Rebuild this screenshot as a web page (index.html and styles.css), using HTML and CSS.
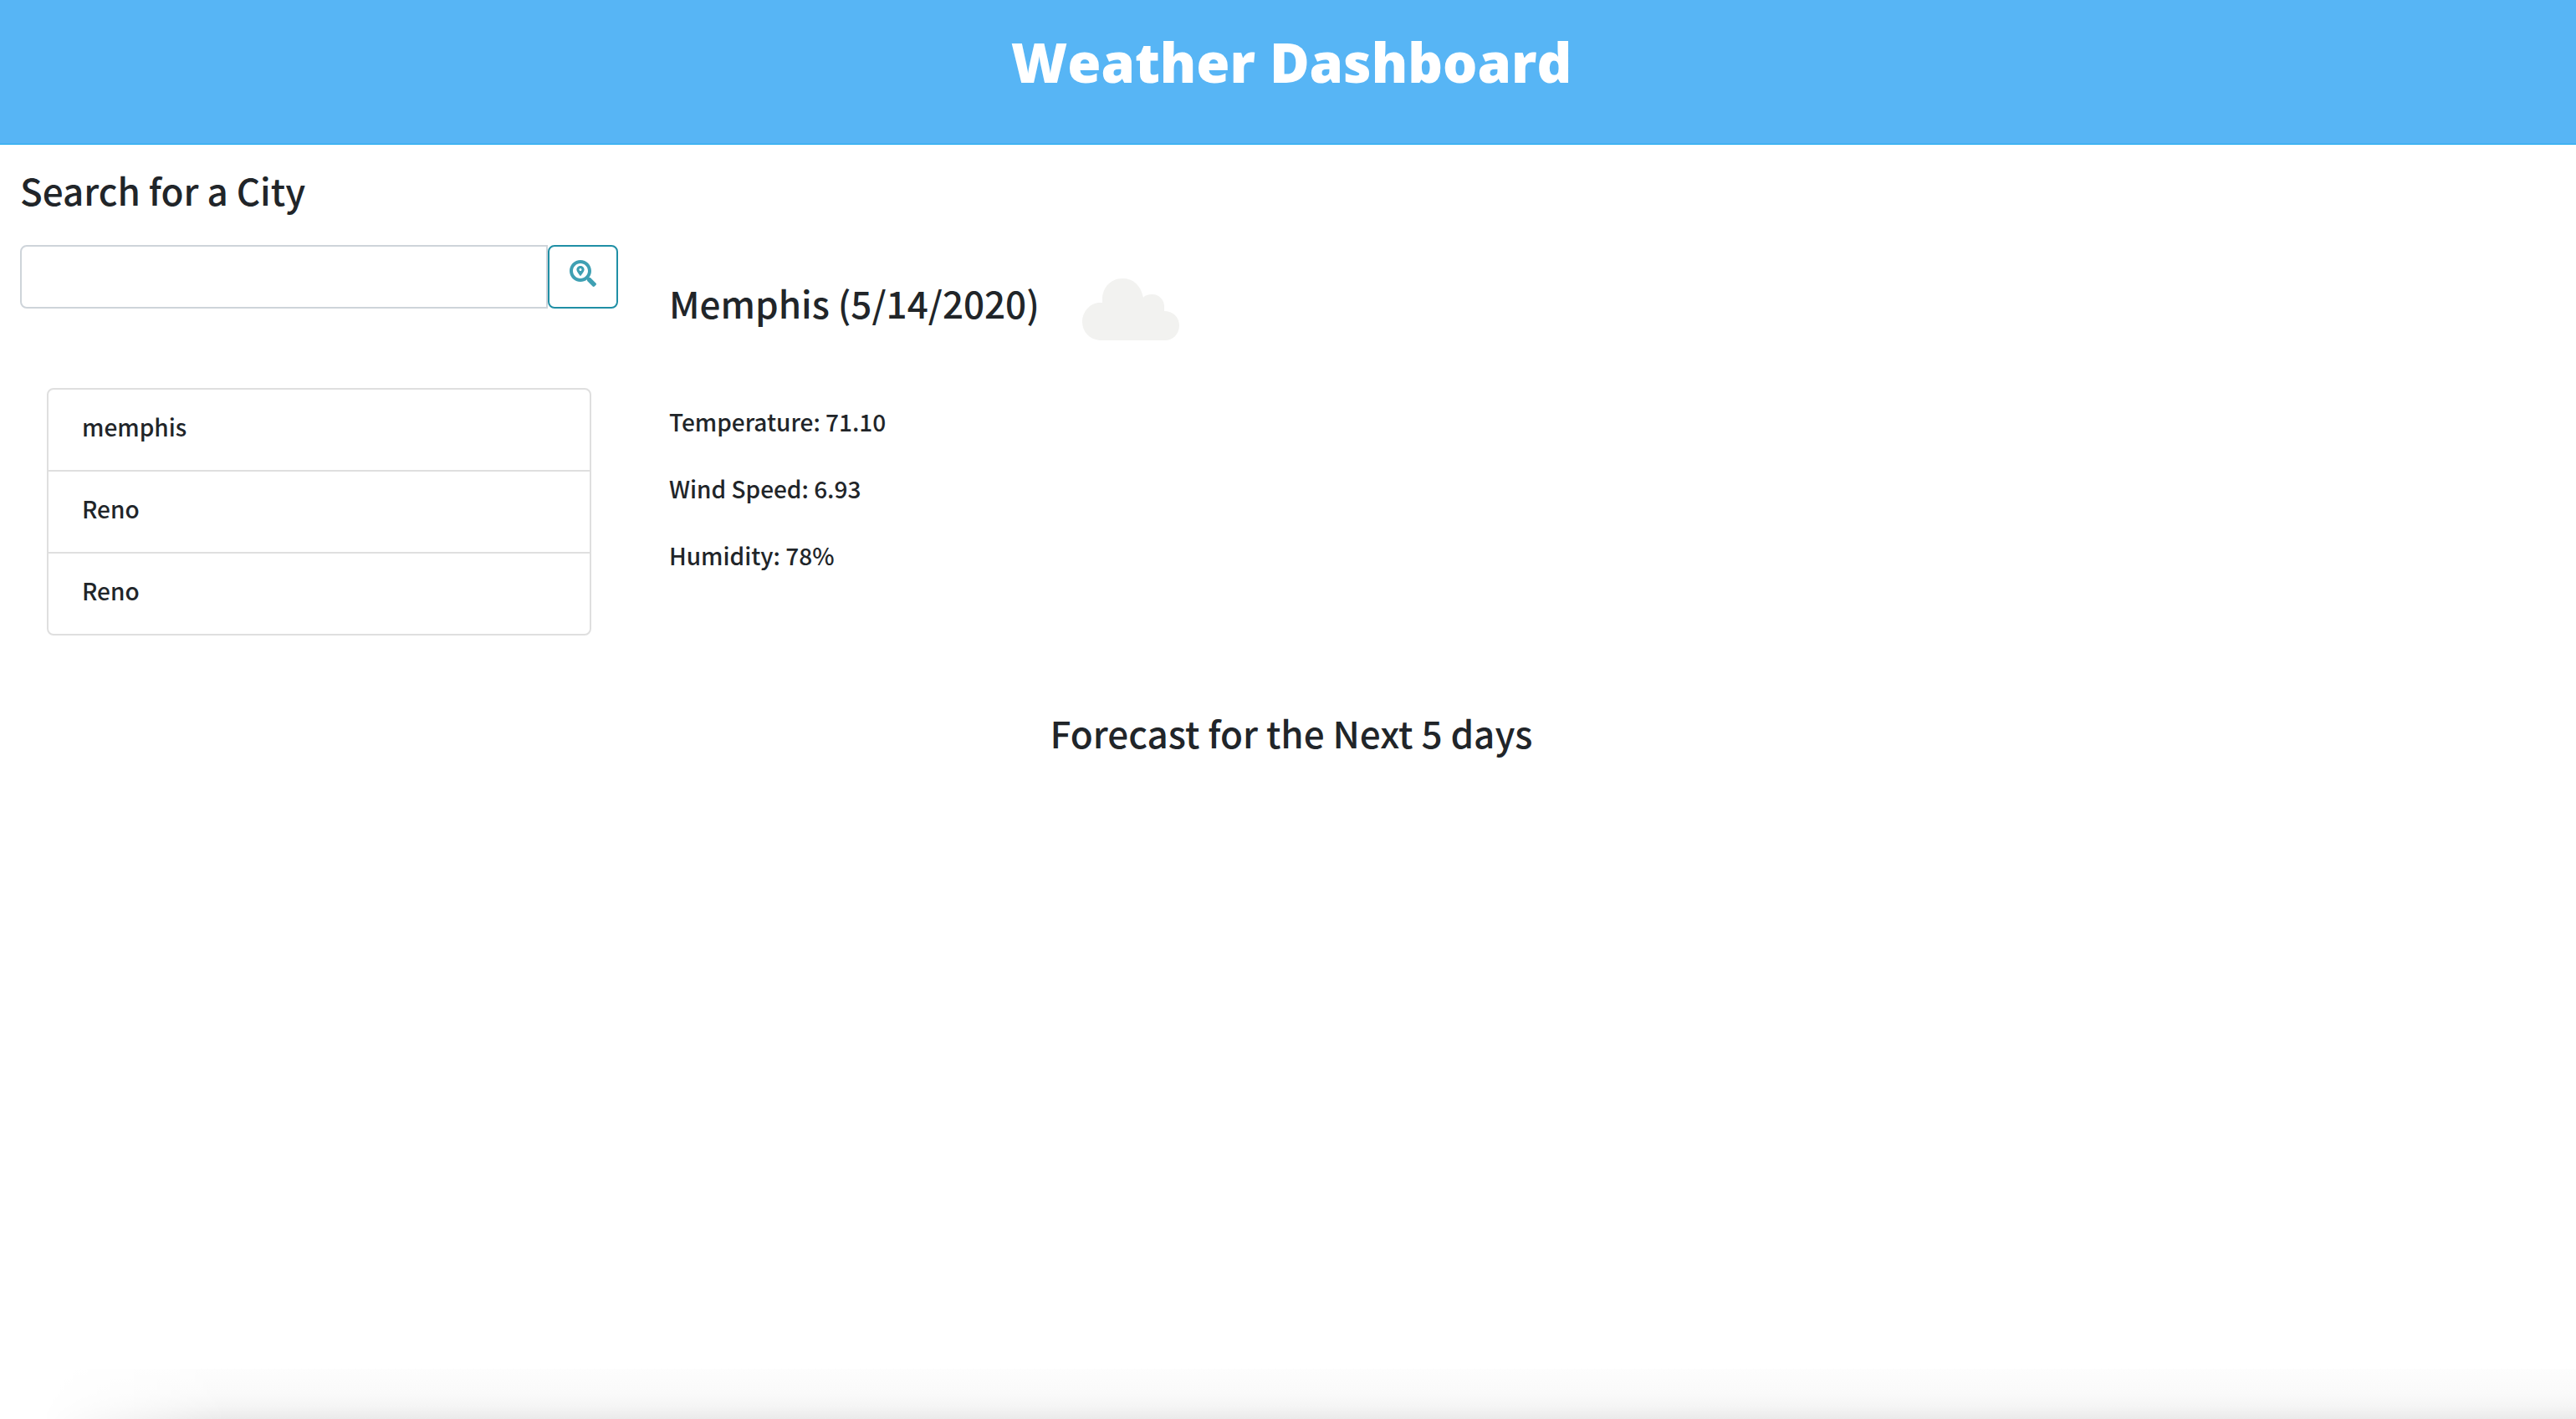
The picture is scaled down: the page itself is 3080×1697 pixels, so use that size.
FILE: index.html
```html
<!DOCTYPE html>
<html lang="en">
<head>
<meta charset="utf-8">
<meta name="viewport" content="width=device-width, initial-scale=1">
<title>Weather Dashboard</title>
<link rel="stylesheet" href="styles.css">
</head>
<body>
<header class="banner">
  <h1 class="banner-title">Weather Dashboard</h1>
</header>
<main>
  <div class="dashboard">
    <aside class="sidebar">
      <form class="search">
        <label class="heading" for="city">Search for a City</label>
        <div class="search-group">
          <input class="search-input" id="city" type="text">
          <button class="search-button" type="button" aria-label="Search">
            <svg class="search-icon" viewBox="0 0 512 512" aria-hidden="true"><path fill="currentColor" d="M505.04 442.66l-99.71-99.69c-4.5-4.5-10.6-7-17-7h-16.3c27.6-35.3 44-79.69 44-127.99C416.03 93.09 322.92 0 208.02 0S0 93.09 0 207.98s93.11 207.98 208.02 207.98c48.3 0 92.71-16.4 128.01-44v16.3c0 6.4 2.5 12.5 7 17l99.71 99.69c9.4 9.4 24.6 9.4 33.9 0l28.3-28.3c9.4-9.4 9.4-24.59.1-33.99zm-297.02-90.7c-79.54 0-144-64.34-144-143.98 0-79.53 64.35-143.98 144-143.98 79.54 0 144 64.34 144 143.98 0 79.53-64.35 143.98-144 143.98zm.02-239.96c-40.78 0-73.84 33.05-73.84 73.83 0 32.96 48.26 93.05 66.75 114.86a9.24 9.24 0 0 0 14.18 0c18.49-21.81 66.75-81.89 66.75-114.86 0-40.78-33.06-73.83-73.84-73.83zm0 96c-13.26 0-24-10.75-24-24 0-13.26 10.75-24 24-24s24 10.74 24 24c0 13.25-10.75 24-24 24z"/></svg>
          </button>
        </div>
      </form>
      <ul class="history">
        <li class="history-item">memphis</li>
        <li class="history-item">Reno</li>
        <li class="history-item">Reno</li>
      </ul>
    </aside>
    <section class="current">
      <div class="current-head">
        <h2 class="heading">Memphis (5/14/2020)</h2>
        <svg class="cloud" viewBox="0 0 118 76" role="img" aria-label="Cloudy">
          <path fill="#f2f2f0" d="M22 75A22 22 0 0 1 1 53C1 40 11 30 22 30H25V26C25 12 35 1 49 1C62 1 71 9 74 24C76 21 80 20 85 20C93 20 99 27 99 34V40C109 40 117 47 117 57C117 68 109 75 100 75Z"/>
        </svg>
      </div>
      <p class="reading">Temperature: 71.10</p>
      <p class="reading">Wind Speed: 6.93</p>
      <p class="reading">Humidity: 78%</p>
    </section>
  </div>
  <h2 class="heading forecast-title">Forecast for the Next 5 days</h2>
</main>
</body>
</html>
```
FILE: styles.css
```css
* {
  box-sizing: border-box;
}

body {
  margin: 0;
  min-height: 100vh;
  background: #fff;
  color: #212529;
  font-family: "Noto Sans CJK JP", "Noto Sans", sans-serif;
  font-size: 28px;
  font-weight: 500;
  line-height: 48px;
}

/* Soft shade along the bottom of the window */
body::after {
  content: "";
  position: fixed;
  right: 0;
  bottom: 0;
  left: 0;
  height: 60px;
  background: linear-gradient(#fdfdfd, #fafafa 50%, #f5f5f5 75%, #eaeaea);
  -webkit-mask-image: linear-gradient(to right, transparent 50px, #000 270px);
  mask-image: linear-gradient(to right, transparent 50px, #000 270px);
  pointer-events: none;
}

.banner {
  padding: 30px 0 54px 8px;
  border-bottom: 1px solid #12a5ee;
  background: #57b5f5;
  color: #fff;
  text-align: center;
}

.banner-title {
  margin: 0;
  font-family: "Open Sans", sans-serif;
  font-size: 65px;
  font-weight: 800;
  line-height: 88px;
}

.dashboard {
  display: flex;
}

.sidebar {
  flex: 0 0 25%;
  padding: 24px 31px 0 24px;
}

.heading {
  display: block;
  margin: 0;
  font-size: 44px;
  font-weight: 500;
  line-height: 60px;
}

.search-group {
  display: flex;
  margin-top: 36px;
}

.search-input {
  flex: 1;
  min-width: 0;
  height: 76px;
  padding: 12px 24px;
  border: 2px solid #ced4da;
  border-radius: 8px 0 0 8px;
  background: #fff;
  color: inherit;
  font: inherit;
}

.search-button {
  width: 84px;
  height: 76px;
  padding: 0 0 8px;
  border: 2px solid #1f8fa5;
  border-radius: 8px;
  background: #fff;
  color: #3fa0b3;
}

.search-icon {
  display: block;
  width: 32px;
  height: 32px;
  margin: 0 auto;
}

.history {
  margin: 95px 32px 0;
  padding: 0;
  border: 2px solid #dfdfdf;
  border-radius: 8px;
  list-style: none;
}

.history-item {
  padding: 20px 40px 28px;
}

.history-item + .history-item {
  border-top: 2px solid #dfdfdf;
}

.current {
  flex: 1;
  padding: 159px 30px 0;
}

.current-head {
  display: flex;
  align-items: flex-start;
  gap: 50px;
  height: 76px;
  margin-bottom: 72px;
}

.cloud {
  width: 118px;
  height: 76px;
}

.reading {
  margin: 0 0 32px;
}

.forecast-title {
  margin-top: 86px;
  padding-left: 8px;
  text-align: center;
}
```
